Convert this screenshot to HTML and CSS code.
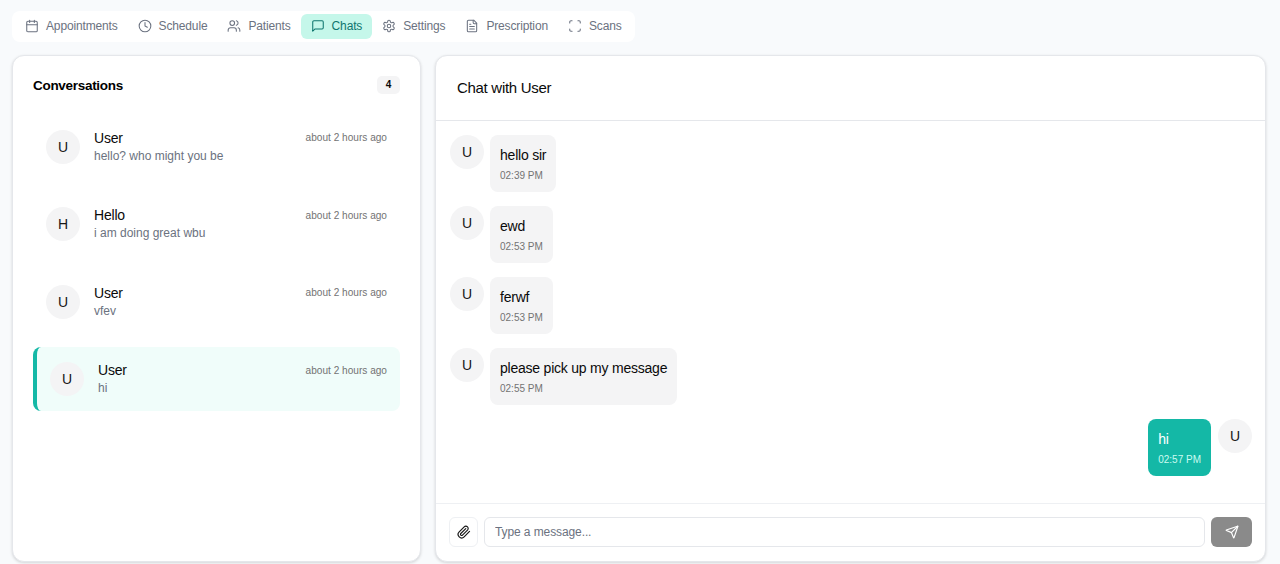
FILE: index.html
```html
<!DOCTYPE html>
<html lang="en">
  <head>
    <meta charset="UTF-8" />
    <meta name="viewport" content="width=device-width, initial-scale=1.0" />
    <title>Chats</title>
    <link rel="stylesheet" href="styles.css">
  </head>
  <body>
    <nav class="tabs">
      <a class="tab">
        <svg class="tab-icon" viewBox="0 0 24 24"><path d="M8 2v4M16 2v4"/><rect x="3" y="4" width="18" height="18" rx="2"/><path d="M3 10h18"/></svg>
        Appointments
      </a>
      <a class="tab">
        <svg class="tab-icon" viewBox="0 0 24 24"><circle cx="12" cy="12" r="10"/><path d="M12 6v6l4 2"/></svg>
        Schedule
      </a>
      <a class="tab">
        <svg class="tab-icon" viewBox="0 0 24 24"><path d="M16 21v-2a4 4 0 0 0-4-4H6a4 4 0 0 0-4 4v2"/><circle cx="9" cy="7" r="4"/><path d="M22 21v-2a4 4 0 0 0-3-3.87M16 3.13a4 4 0 0 1 0 7.75"/></svg>
        Patients
      </a>
      <a class="tab active">
        <svg class="tab-icon" viewBox="0 0 24 24"><path d="M21 15a2 2 0 0 1-2 2H7l-4 4V5a2 2 0 0 1 2-2h14a2 2 0 0 1 2 2z"/></svg>
        Chats
      </a>
      <a class="tab">
        <svg class="tab-icon" viewBox="0 0 24 24"><path d="M12.22 2h-.44a2 2 0 0 0-2 2v.18a2 2 0 0 1-1 1.73l-.43.25a2 2 0 0 1-2 0l-.15-.08a2 2 0 0 0-2.73.73l-.22.38a2 2 0 0 0 .73 2.73l.15.1a2 2 0 0 1 1 1.72v.51a2 2 0 0 1-1 1.74l-.15.09a2 2 0 0 0-.73 2.73l.22.38a2 2 0 0 0 2.73.73l.15-.08a2 2 0 0 1 2 0l.43.25a2 2 0 0 1 1 1.73V20a2 2 0 0 0 2 2h.44a2 2 0 0 0 2-2v-.18a2 2 0 0 1 1-1.73l.43-.25a2 2 0 0 1 2 0l.15.08a2 2 0 0 0 2.73-.73l.22-.39a2 2 0 0 0-.73-2.73l-.15-.08a2 2 0 0 1-1-1.74v-.5a2 2 0 0 1 1-1.74l.15-.09a2 2 0 0 0 .73-2.73l-.22-.38a2 2 0 0 0-2.73-.73l-.15.08a2 2 0 0 1-2 0l-.43-.25a2 2 0 0 1-1-1.73V4a2 2 0 0 0-2-2z"/><circle cx="12" cy="12" r="3"/></svg>
        Settings
      </a>
      <a class="tab">
        <svg class="tab-icon" viewBox="0 0 24 24"><path d="M15 2H6a2 2 0 0 0-2 2v16a2 2 0 0 0 2 2h12a2 2 0 0 0 2-2V7z"/><path d="M14 2v4a2 2 0 0 0 2 2h4M10 9H8M16 13H8M16 17H8"/></svg>
        Prescription
      </a>
      <a class="tab">
        <svg class="tab-icon" viewBox="0 0 24 24"><path d="M3 7V5a2 2 0 0 1 2-2h2M17 3h2a2 2 0 0 1 2 2v2M21 17v2a2 2 0 0 1-2 2h-2M7 21H5a2 2 0 0 1-2-2v-2"/></svg>
        Scans
      </a>
    </nav>

    <main class="panels">
      <section class="card conversations">
        <div class="conv-head">
          <h2>Conversations</h2>
          <span class="count">4</span>
        </div>
        <div class="conv-list">
          <div class="conv">
            <div class="avatar">U</div>
            <div class="conv-body">
              <div class="conv-top"><span class="conv-name">User</span><span class="conv-time">about 2 hours ago</span></div>
              <div class="conv-last">hello? who might you be</div>
            </div>
          </div>
          <div class="conv">
            <div class="avatar">H</div>
            <div class="conv-body">
              <div class="conv-top"><span class="conv-name">Hello</span><span class="conv-time">about 2 hours ago</span></div>
              <div class="conv-last">i am doing great wbu</div>
            </div>
          </div>
          <div class="conv">
            <div class="avatar">U</div>
            <div class="conv-body">
              <div class="conv-top"><span class="conv-name">User</span><span class="conv-time">about 2 hours ago</span></div>
              <div class="conv-last">vfev</div>
            </div>
          </div>
          <div class="conv selected">
            <div class="avatar">U</div>
            <div class="conv-body">
              <div class="conv-top"><span class="conv-name">User</span><span class="conv-time">about 2 hours ago</span></div>
              <div class="conv-last">hi</div>
            </div>
          </div>
        </div>
      </section>

      <section class="card chat">
        <header class="chat-head">Chat with User</header>
        <div class="messages">
          <div class="msg">
            <div class="avatar">U</div>
            <div class="bubble"><div class="msg-text">hello sir</div><div class="msg-time">02:39 PM</div></div>
          </div>
          <div class="msg">
            <div class="avatar">U</div>
            <div class="bubble"><div class="msg-text">ewd</div><div class="msg-time">02:53 PM</div></div>
          </div>
          <div class="msg">
            <div class="avatar">U</div>
            <div class="bubble"><div class="msg-text">ferwf</div><div class="msg-time">02:53 PM</div></div>
          </div>
          <div class="msg">
            <div class="avatar">U</div>
            <div class="bubble"><div class="msg-text">please pick up my message</div><div class="msg-time">02:55 PM</div></div>
          </div>
          <div class="msg mine">
            <div class="bubble"><div class="msg-text">hi</div><div class="msg-time">02:57 PM</div></div>
            <div class="avatar">U</div>
          </div>
        </div>
        <form class="composer">
          <button type="button" class="attach">
            <svg viewBox="0 0 24 24"><path d="m21.44 11.05-9.19 9.19a6 6 0 0 1-8.49-8.49l8.57-8.57A4 4 0 1 1 18 8.84l-8.59 8.57a2 2 0 0 1-2.83-2.83l8.49-8.48"/></svg>
          </button>
          <input class="msg-input" type="text" placeholder="Type a message...">
          <button type="button" class="send">
            <svg viewBox="0 0 24 24"><path d="M14.536 21.686a.5.5 0 0 0 .937-.024l6.5-19a.496.496 0 0 0-.635-.635l-19 6.5a.5.5 0 0 0-.024.937l7.93 3.18a2 2 0 0 1 1.112 1.11z"/><path d="m21.854 2.147-10.94 10.939"/></svg>
          </button>
        </form>
      </section>
    </main>
  </body>
</html>
```

FILE: styles.css
```css
* {
  box-sizing: border-box;
}

html,
body {
  height: 100%;
}

body {
  margin: 0;
  padding: 11px 14px 2px 12px;
  background-color: #f8fafc;
  color: #0a0a0a;
  font-family: "Liberation Sans", Arial, sans-serif;
  display: flex;
  flex-direction: column;
  overflow: hidden;
}

.tabs {
  align-self: flex-start;
  display: flex;
  width: 623px;
  height: 31px;
  padding: 3px;
  background-color: #fff;
  border-radius: 8px;
}

.tab {
  display: flex;
  align-items: center;
  gap: 7px;
  height: 25px;
  padding: 0 10px 1px;
  font-size: 12px;
  letter-spacing: -0.15px;
  color: #6b7280;
  border-radius: 6px;
  white-space: nowrap;
}

.tab.active {
  background-color: #c5f7ea;
  color: #0f766e;
}

.tab-icon {
  width: 14px;
  height: 14px;
  fill: none;
  stroke: currentColor;
  stroke-width: 1.8;
  stroke-linecap: round;
  stroke-linejoin: round;
}

.panels {
  flex: 1;
  display: flex;
  gap: 14px;
  margin-top: 13px;
  min-height: 0;
}

.card {
  background-color: #fff;
  border: 1px solid #e5e7eb;
  border-radius: 12px;
  box-shadow: 0 1px 3px rgba(0, 0, 0, 0.15);
}

.conversations {
  width: 409px;
  padding: 20px;
}

.conv-head {
  display: flex;
  justify-content: space-between;
  align-items: center;
  height: 18px;
}

.conv-head h2 {
  margin: 0;
  font-size: 13.5px;
  font-weight: 700;
  letter-spacing: -0.3px;
  color: #000;
}

.count {
  width: 23px;
  height: 18px;
  line-height: 18px;
  text-align: center;
  font-size: 10px;
  font-weight: 700;
  background-color: #f4f4f5;
  border-radius: 5px;
}

.conv-list {
  display: flex;
  flex-direction: column;
  gap: 13.5px;
  margin-top: 20.5px;
}

.conv {
  display: flex;
  align-items: center;
  gap: 14px;
  height: 64px;
  padding: 0 13px;
  border-radius: 8px;
}

.conv.selected {
  background-color: #f0fdfa;
  border-left: 4px solid #14b8a6;
}

.avatar {
  flex: none;
  width: 34px;
  height: 34px;
  line-height: 34px;
  text-align: center;
  font-size: 14px;
  color: #171717;
  background-color: #f4f4f5;
  border-radius: 50%;
}

.conv-body {
  flex: 1;
}

.conv-top {
  display: flex;
  justify-content: space-between;
  align-items: center;
}

.conv-name {
  font-size: 14px;
  letter-spacing: -0.2px;
  line-height: 18px;
}

.conv-time {
  font-size: 10.1px;
  color: #737373;
}

.conv-last {
  font-size: 12px;
  line-height: 18px;
  color: #6b7280;
}

.chat {
  flex: 1;
  display: flex;
  flex-direction: column;
  min-width: 0;
}

.chat-head {
  height: 65px;
  padding: 0 21px 2px;
  display: flex;
  align-items: center;
  font-size: 15px;
  letter-spacing: -0.3px;
  border-bottom: 1px solid #e5e7eb;
}

.messages {
  flex: 1;
  display: flex;
  flex-direction: column;
  gap: 14px;
  padding: 14px 13px 0 14px;
}

.msg {
  display: flex;
  gap: 6px;
}

.msg.mine {
  justify-content: flex-end;
  gap: 7px;
}

.bubble {
  padding: 10px 10px 9px;
  background-color: #f4f4f5;
  border-radius: 8px;
}

.msg-text {
  font-size: 14px;
  letter-spacing: -0.22px;
  line-height: 20px;
}

.msg-time {
  margin-top: 4px;
  font-size: 10px;
  line-height: 14px;
  color: #737373;
}

.mine .bubble {
  background-color: #14b8a6;
  color: #fff;
}

.mine .msg-time {
  color: #ccfbf1;
}

.composer {
  display: flex;
  gap: 6px;
  height: 58px;
  padding: 13px 13px 0 13px;
  border-top: 1px solid #eef0f3;
}

.attach,
.send {
  display: flex;
  align-items: center;
  justify-content: center;
  height: 30px;
  padding: 0;
  border-radius: 6px;
  cursor: pointer;
}

.attach {
  width: 29px;
  background-color: #fff;
  border: 1px solid #eef0f3;
}

.attach svg,
.send svg {
  width: 14px;
  height: 14px;
  fill: none;
  stroke-width: 2;
  stroke-linecap: round;
  stroke-linejoin: round;
}

.attach svg {
  stroke: #171717;
}

.send {
  width: 41px;
  background-color: #8a8a8a;
  border: none;
}

.send svg {
  stroke: #fff;
}

.msg-input {
  flex: 1;
  height: 30px;
  padding: 0 10px;
  font-family: inherit;
  font-size: 12px;
  letter-spacing: -0.1px;
  background-color: #fff;
  border: 1px solid #e5e7eb;
  border-radius: 6px;
  outline: none;
}

.msg-input::placeholder {
  color: #6b7280;
}
```
